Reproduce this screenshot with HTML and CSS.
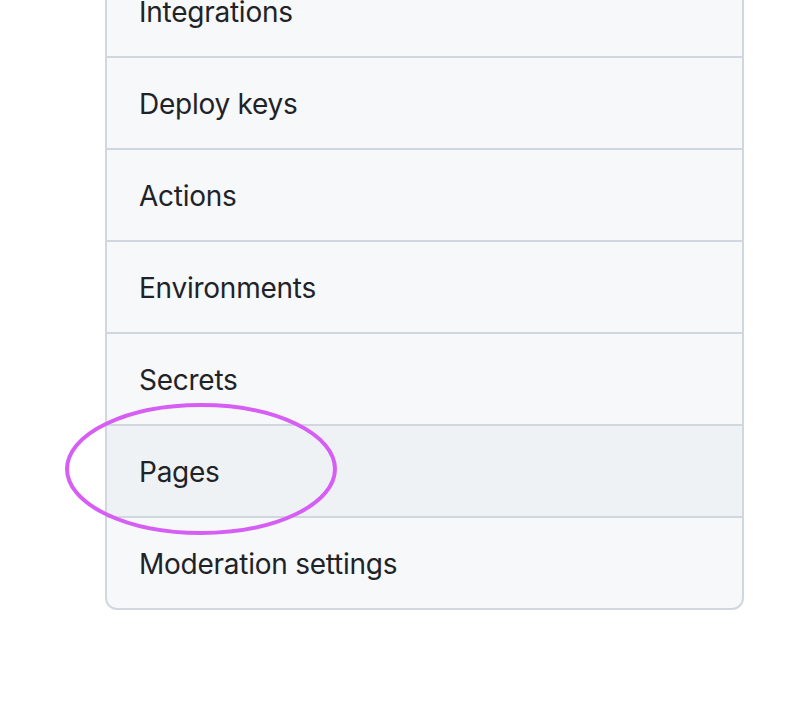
FILE: index.html
```html
<!DOCTYPE html>
<html>
<head>
<meta charset="utf-8">
<link rel="stylesheet" href="styles.css">
</head>
<body>
<div class="page">
  <nav class="menu">
    <div class="item">Integrations</div>
    <div class="item">Deploy keys</div>
    <div class="item">Actions</div>
    <div class="item">Environments</div>
    <div class="item">Secrets</div>
    <div class="item selected">Pages</div>
    <div class="item">Moderation settings</div>
  </nav>
  <svg class="mark" width="280" height="140" viewBox="0 0 280 140">
    <ellipse cx="136" cy="66" rx="134" ry="64" fill="none" stroke="#d65ef5" stroke-width="4"/>
  </svg>
</div>
</body>
</html>
```
FILE: styles.css
```css
html, body {
  margin: 0;
  padding: 0;
  background: #ffffff;
}
.page {
  position: relative;
  width: 790px;
  height: 708px;
  overflow: hidden;
}
.menu {
  margin: -36px 0 0 105px;
  width: 635px;
  border: 2px solid #d0d7de;
  border-radius: 12px;
  background: #f6f8fa;
  overflow: hidden;
  font-family: Inter, "Liberation Sans", sans-serif;
  font-size: 28px;
  letter-spacing: -0.25px;
  color: #1f2328;
}
.item {
  height: 88px;
  padding-top: 2px;
  display: flex;
  align-items: center;
  padding-left: 32px;
  border-top: 2px solid #d0d7de;
}
.item:first-child {
  border-top: none;
}
.item.selected {
  background: #eff2f5;
}
.mark {
  position: absolute;
  left: 65px;
  top: 403px;
}
```
